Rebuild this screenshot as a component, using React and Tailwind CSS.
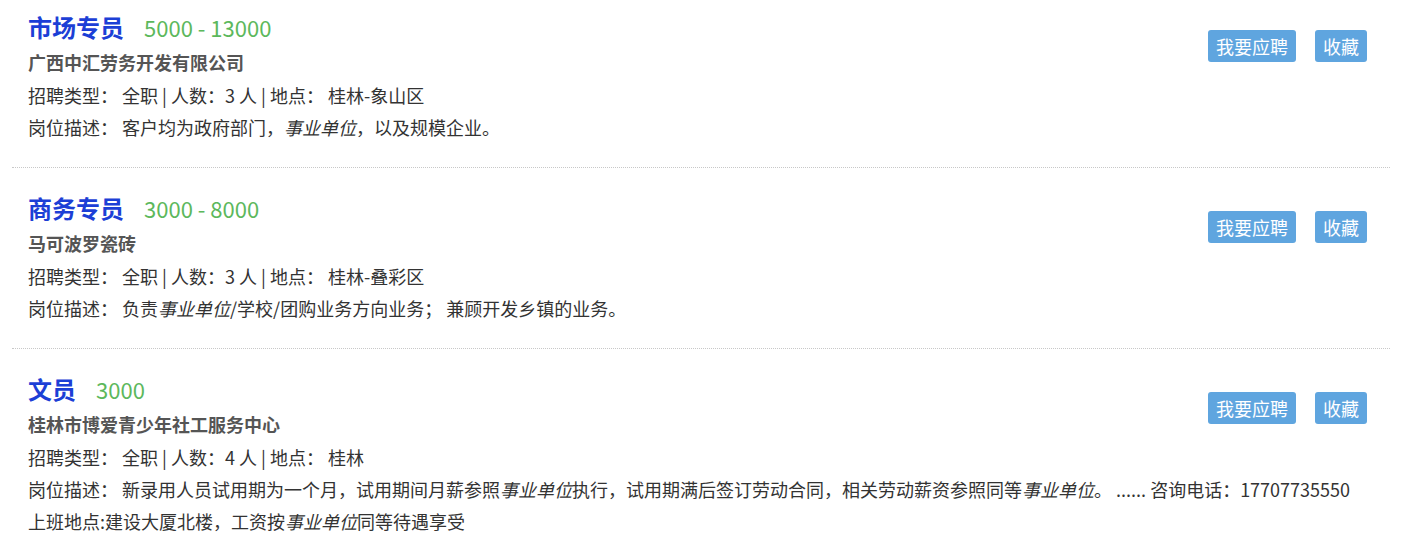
import React from "react";

const jobs = [
  {
    title: "市场专员",
    salary: "5000 - 13000",
    company: "广西中汇劳务开发有限公司",
    count: "3",
    place: "桂林-象山区",
    desc: (
      <>
        客户均为政府部门，<em>事业单位</em>，以及规模企业。
      </>
    ),
  },
  {
    title: "商务专员",
    salary: "3000 - 8000",
    company: "马可波罗瓷砖",
    count: "3",
    place: "桂林-叠彩区",
    desc: (
      <>
        负责<em>事业单位</em>/学校/团购业务方向业务； 兼顾开发乡镇的业务。
      </>
    ),
  },
  {
    title: "文员",
    salary: "3000",
    company: "桂林市博爱青少年社工服务中心",
    count: "4",
    place: "桂林",
    desc: (
      <>
        新录用人员试用期为一个月，试用期间月薪参照<em>事业单位</em>执行，试用期满后签订劳动合同，相关劳动薪资参照同等<em>事业单位</em>。 ...... 咨询电话：17707735550
        <br />
        上班地点:建设大厦北楼，工资按<em>事业单位</em>同等待遇享受
      </>
    ),
  },
];

function Item({ job, first, last }) {
  return (
    <div
      className={
        "px-[16px] pb-[24px] " +
        (first ? "pt-[9px] " : "pt-[22px] ") +
        (last ? "" : "border-b border-dotted border-[#c8c8c8]")
      }
    >
      <div className="float-right mt-[21px] mr-[7px] flex gap-[19px]">
        <button className="h-[32px] px-[8px] rounded-[3px] bg-[#5fa5df] text-white text-[18px] leading-[32px]">
          我要应聘
        </button>
        <button className="h-[32px] px-[8px] rounded-[3px] bg-[#5fa5df] text-white text-[18px] leading-[32px]">
          收藏
        </button>
      </div>
      <div className="flex items-baseline h-[36px] leading-[36px]">
        <span className="text-[24px] font-bold text-[#1c3fd6]">{job.title}</span>
        <span className="ml-[20px] text-[22px] text-[#5cb85c]">{job.salary}</span>
      </div>
      <div className="mt-[1px] h-[33px] leading-[33px] text-[18px] font-bold text-[#555]">
        {job.company}
      </div>
      <div className="leading-[32px] text-[18px] text-[#333]">
        招聘类型：&nbsp;全职 | 人数：{job.count} 人 | 地点：&nbsp;{job.place}
      </div>
      <div className="leading-[32px] text-[18px] text-[#333]">
        岗位描述：&nbsp;{job.desc}
      </div>
    </div>
  );
}

export default function App() {
  return (
    <div
      className="bg-white w-[1409px] h-[552px] overflow-hidden"
      style={{ fontFamily: '"Noto Sans CJK SC", "Noto Sans", sans-serif' }}
    >
      <div className="ml-[12px] w-[1378px]">
        {jobs.map((j, i) => (
          <Item key={i} job={j} first={i === 0} last={i === jobs.length - 1} />
        ))}
      </div>
    </div>
  );
}
